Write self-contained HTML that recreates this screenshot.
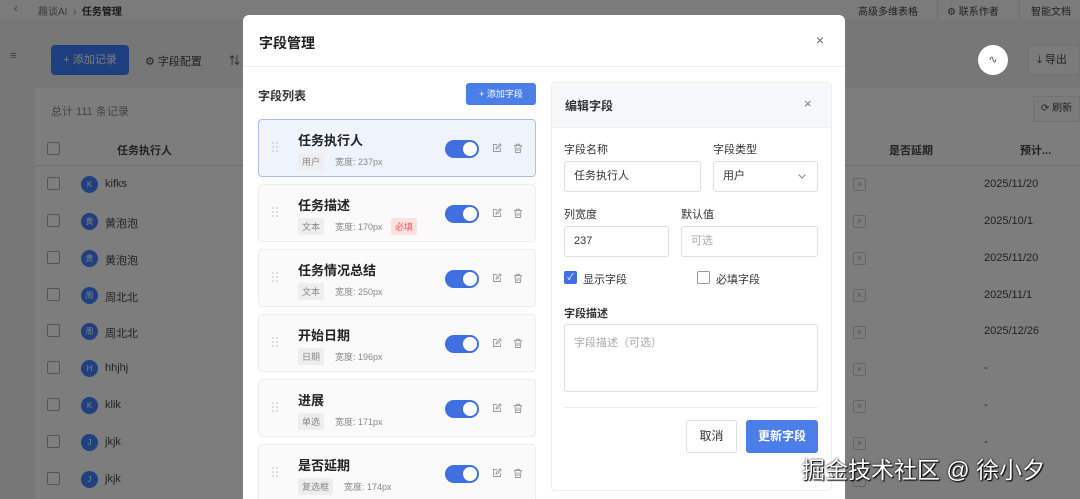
<!DOCTYPE html>
<html><head><meta charset="utf-8"><style>
*{box-sizing:border-box;margin:0;padding:0}
html,body{width:1080px;height:499px;overflow:hidden}
body{position:relative;background:#eeeeee;font-family:"Liberation Sans","Noto Sans CJK SC",sans-serif;font-size:12px;color:#222}
.a{position:absolute}
.chk{position:absolute;width:13px;height:13px;border:1px solid #aaa;border-radius:2px;background:#fff}
.av{position:absolute;width:17px;height:17px;border-radius:50%;background:#4080ff;color:#fff;font-size:8px;text-align:center;line-height:17px}
.xb{position:absolute;width:13px;height:13px;border:1px solid #ccc;border-radius:2px;color:#aaa;font-size:9px;text-align:center;line-height:11px}
.card{position:absolute;left:258px;width:278px;height:58px;border:1px solid #eceef1;border-radius:4px;background:#fafafa}
.card .t{position:absolute;left:39px;top:10px;font-size:13px;font-weight:bold;color:#222}
.card .tag{position:absolute;left:39px;top:33px;background:#eee;color:#888;font-size:9px;padding:2px 4px;border-radius:2px}
.card .w{position:absolute;top:35px;font-size:9px;color:#888}
.card .dr{position:absolute;left:13px;top:22px}
.card .tg{position:absolute;left:186px;top:20px;width:34px;height:18px;border-radius:9px;background:#3f6fe0}
.card .tg:after{content:"";position:absolute;right:2px;top:2px;width:14px;height:14px;border-radius:50%;background:#fff}
.card .ic{position:absolute;top:23px}
.lb{position:absolute;font-size:11px;color:#333}
.in{position:absolute;border:1px solid #dcdfe6;border-radius:3px;background:#fff;font-size:11px;padding-left:9px;color:#333}
.r{font-size:11px;color:#444}
</style></head><body>
<div class="a" style="left:0;top:0;width:1080px;height:20px;background:#f6f6f6"></div>
<div class="a" style="left:14px;top:3px;font-size:11px;color:#777">‹</div>
<div class="a" style="left:38px;top:3px;font-size:10px;color:#777">趣谈AI &nbsp;›&nbsp; <b style="color:#333">任务管理</b></div>
<div class="a" style="left:858px;top:3px;font-size:10px;color:#444">高级多维表格</div>
<div class="a" style="left:937px;top:0;width:1px;height:20px;background:#ddd"></div>
<div class="a" style="left:947px;top:3px;font-size:10px;color:#444">⚙ 联系作者</div>
<div class="a" style="left:1019px;top:0;width:1px;height:20px;background:#ddd"></div>
<div class="a" style="left:1031px;top:3px;font-size:10px;color:#444">智能文档</div>
<div class="a" style="left:10px;top:50px;color:#777;font-size:11px">≡</div>
<div class="a" style="left:51px;top:45px;width:78px;height:30px;background:#3c7cff;border-radius:4px;color:#fff;font-size:11px;line-height:30px;text-align:center">+ 添加记录</div>
<div class="a" style="left:145px;top:53px;font-size:11px;color:#444">⚙ 字段配置</div>
<div class="a" style="left:229px;top:52px;font-size:11px;color:#444">⇅</div>
<div class="a" style="left:1028px;top:45px;width:52px;height:30px;border:1px solid #e2e2e2;border-radius:3px 0 0 3px;background:#f6f6f6;color:#444;font-size:11px;line-height:28px;padding-left:8px">⤓ 导出</div>
<div class="a" style="left:35px;top:88px;width:1045px;height:411px;background:#fafafa"></div>
<div class="a" style="left:51px;top:103px;font-size:11px;color:#888">总计 111 条记录</div>
<div class="a" style="left:1033px;top:96px;width:47px;height:26px;border:1px solid #e2e2e2;background:#f6f6f6;color:#444;font-size:10px;line-height:24px;padding-left:7px">⟳ 刷新</div>
<div class="a" style="left:35px;top:165px;width:1045px;height:1px;background:#dadada"></div>
<div class="chk" style="left:47px;top:142px"></div>
<div class="a" style="left:117px;top:142px;font-size:11px;font-weight:bold;color:#444">任务执行人</div>
<div class="a" style="left:889px;top:142px;font-size:11px;font-weight:bold;color:#444">是否延期</div>
<div class="a" style="left:1020px;top:142px;font-size:11px;font-weight:bold;color:#444">预计...</div>
<div class="chk" style="left:47px;top:177px"></div><div class="av" style="left:81px;top:176px">K</div><div class="a r" style="left:105px;top:178px">kifks</div>
<div class="chk" style="left:47px;top:214px"></div><div class="av" style="left:81px;top:213px">黄</div><div class="a r" style="left:105px;top:215px">黄泡泡</div>
<div class="chk" style="left:47px;top:251px"></div><div class="av" style="left:81px;top:250px">黄</div><div class="a r" style="left:105px;top:252px">黄泡泡</div>
<div class="chk" style="left:47px;top:288px"></div><div class="av" style="left:81px;top:287px">周</div><div class="a r" style="left:105px;top:289px">周北北</div>
<div class="chk" style="left:47px;top:324px"></div><div class="av" style="left:81px;top:323px">周</div><div class="a r" style="left:105px;top:325px">周北北</div>
<div class="chk" style="left:47px;top:361px"></div><div class="av" style="left:81px;top:360px">H</div><div class="a r" style="left:105px;top:362px">hhjhj</div>
<div class="chk" style="left:47px;top:398px"></div><div class="av" style="left:81px;top:397px">K</div><div class="a r" style="left:105px;top:399px">klik</div>
<div class="chk" style="left:47px;top:435px"></div><div class="av" style="left:81px;top:434px">J</div><div class="a r" style="left:105px;top:436px">jkjk</div>
<div class="chk" style="left:47px;top:472px"></div><div class="av" style="left:81px;top:471px">J</div><div class="a r" style="left:105px;top:473px">jkjk</div>
<div class="xb" style="left:853px;top:178px">×</div><div class="a r" style="left:984px;top:178px">2025/11/20</div>
<div class="xb" style="left:853px;top:215px">×</div><div class="a r" style="left:984px;top:215px">2025/10/1</div>
<div class="xb" style="left:853px;top:252px">×</div><div class="a r" style="left:984px;top:252px">2025/11/20</div>
<div class="xb" style="left:853px;top:289px">×</div><div class="a r" style="left:984px;top:289px">2025/11/1</div>
<div class="xb" style="left:853px;top:326px">×</div><div class="a r" style="left:984px;top:325px">2025/12/26</div>
<div class="xb" style="left:853px;top:363px">×</div><div class="a r" style="left:984px;top:362px">-</div>
<div class="xb" style="left:853px;top:400px">×</div><div class="a r" style="left:984px;top:399px">-</div>
<div class="xb" style="left:853px;top:437px">×</div><div class="a r" style="left:984px;top:436px">-</div>
<div class="xb" style="left:853px;top:474px">×</div><div class="a r" style="left:984px;top:473px">-</div>

<!-- dim overlay -->
<div class="a" style="left:0;top:0;width:1080px;height:499px;background:rgba(0,0,0,0.5)"></div>
<div class="a" style="left:978px;top:45px;width:30px;height:30px;border-radius:50%;background:#fff;color:#555;text-align:center;line-height:30px;font-size:11px">∿</div>

<div class="a" style="left:243px;top:15px;width:602px;height:484px;background:#fff;border-radius:6px 6px 0 0"></div>
<div class="a" style="left:259px;top:33px;font-size:14px;font-weight:bold">字段管理</div>
<div class="a" style="left:816px;top:32px;font-size:14px;color:#666">×</div>
<div class="a" style="left:243px;top:66px;width:602px;height:1px;background:#f0f0f0"></div>
<div class="a" style="left:258px;top:87px;font-size:12px;font-weight:bold;color:#333">字段列表</div>
<div class="a" style="left:466px;top:83px;width:70px;height:22px;background:#4c7ee8;border-radius:3px;color:#fff;font-size:9px;line-height:22px;text-align:center">+ 添加字段</div>

<svg width="0" height="0" style="position:absolute"><defs>
<symbol id="dr" viewBox="0 0 6 10"><g fill="#bbb"><circle cx="1" cy="1" r=".8"/><circle cx="5" cy="1" r=".8"/><circle cx="1" cy="5" r=".8"/><circle cx="5" cy="5" r=".8"/><circle cx="1" cy="9" r=".8"/><circle cx="5" cy="9" r=".8"/></g></symbol>
<symbol id="ed" viewBox="0 0 10 10"><path d="M5 1.5H1.5v7h7V5M4 6l.3-1.6L8 .8l1.2 1.2L5.6 5.7z" fill="none" stroke="#999" stroke-width=".9"/></symbol>
<symbol id="dl" viewBox="0 0 10 10"><path d="M1 2.5h8M3.5 2.5V1.2h3v1.3M2 2.5l.6 7h4.8l.6-7M4 4.5v3.5M6 4.5v3.5" fill="none" stroke="#999" stroke-width=".9"/></symbol>
</defs></svg>

<div class="card" style="top:119px;background:#eef3fc;border-color:#a9c0ec"><svg class="dr" width="6" height="10"><use href="#dr"/></svg><div class="t">任务执行人</div><div class="tag">用户</div><div class="w" style="left:76px">宽度: 237px</div><div class="tg"></div><svg class="ic" style="left:233px" width="10" height="10"><use href="#ed"/></svg><svg class="ic" style="left:254px" width="10" height="10"><use href="#dl"/></svg></div>
<div class="card" style="top:184px"><svg class="dr" width="6" height="10"><use href="#dr"/></svg><div class="t">任务描述</div><div class="tag">文本</div><div class="w" style="left:76px">宽度: 170px</div><div class="tag" style="left:132px;background:#fde0e0;color:#e55">必填</div><div class="tg"></div><svg class="ic" style="left:233px" width="10" height="10"><use href="#ed"/></svg><svg class="ic" style="left:254px" width="10" height="10"><use href="#dl"/></svg></div>
<div class="card" style="top:249px"><svg class="dr" width="6" height="10"><use href="#dr"/></svg><div class="t">任务情况总结</div><div class="tag">文本</div><div class="w" style="left:76px">宽度: 250px</div><div class="tg"></div><svg class="ic" style="left:233px" width="10" height="10"><use href="#ed"/></svg><svg class="ic" style="left:254px" width="10" height="10"><use href="#dl"/></svg></div>
<div class="card" style="top:314px"><svg class="dr" width="6" height="10"><use href="#dr"/></svg><div class="t">开始日期</div><div class="tag">日期</div><div class="w" style="left:76px">宽度: 196px</div><div class="tg"></div><svg class="ic" style="left:233px" width="10" height="10"><use href="#ed"/></svg><svg class="ic" style="left:254px" width="10" height="10"><use href="#dl"/></svg></div>
<div class="card" style="top:379px"><svg class="dr" width="6" height="10"><use href="#dr"/></svg><div class="t">进展</div><div class="tag">单选</div><div class="w" style="left:76px">宽度: 171px</div><div class="tg"></div><svg class="ic" style="left:233px" width="10" height="10"><use href="#ed"/></svg><svg class="ic" style="left:254px" width="10" height="10"><use href="#dl"/></svg></div>
<div class="card" style="top:444px;height:70px"><svg class="dr" width="6" height="10"><use href="#dr"/></svg><div class="t">是否延期</div><div class="tag">复选框</div><div class="w" style="left:85px">宽度: 174px</div><div class="tg"></div><svg class="ic" style="left:233px" width="10" height="10"><use href="#ed"/></svg><svg class="ic" style="left:254px" width="10" height="10"><use href="#dl"/></svg></div>

<div class="a" style="left:551px;top:82px;width:281px;height:409px;border:1px solid #eceef1;border-radius:4px;background:#fff"></div>
<div class="a" style="left:552px;top:83px;width:279px;height:45px;background:#f7f8fa;border-bottom:1px solid #eceef1"></div>
<div class="a" style="left:565px;top:97px;font-size:12px;font-weight:bold;color:#333">编辑字段</div>
<div class="a" style="left:804px;top:96px;font-size:13px;color:#777">×</div>
<div class="lb" style="left:564px;top:141px">字段名称</div>
<div class="lb" style="left:713px;top:141px">字段类型</div>
<div class="in" style="left:564px;top:161px;width:137px;height:31px;line-height:29px">任务执行人</div>
<div class="in" style="left:713px;top:161px;width:105px;height:31px;line-height:29px">用户<svg style="position:absolute;right:11px;top:12px" width="8" height="5"><path d="M.5.5 4 4 7.5.5" fill="none" stroke="#888"/></svg></div>
<div class="lb" style="left:564px;top:206px">列宽度</div>
<div class="lb" style="left:681px;top:206px">默认值</div>
<div class="in" style="left:564px;top:226px;width:105px;height:31px;line-height:29px">237</div>
<div class="in" style="left:681px;top:226px;width:137px;height:31px;line-height:29px;color:#aaa">可选</div>
<div class="a" style="left:564px;top:271px;width:13px;height:13px;background:#3f6fe0;border-radius:2px;color:#fff;font-size:9px;text-align:center;line-height:13px">✓</div>
<div class="lb" style="left:583px;top:271px">显示字段</div>
<div class="a" style="left:697px;top:271px;width:13px;height:13px;border:1px solid #999;border-radius:2px"></div>
<div class="lb" style="left:716px;top:271px">必填字段</div>
<div class="lb" style="left:564px;top:305px;font-weight:bold">字段描述</div>
<div class="in" style="left:564px;top:324px;width:254px;height:68px;padding-top:9px;color:#aaa">字段描述（可选）</div>
<div class="a" style="left:564px;top:407px;width:254px;height:1px;background:#eee"></div>
<div class="a" style="left:686px;top:420px;width:51px;height:33px;border:1px solid #dcdfe6;border-radius:3px;font-size:12px;line-height:31px;text-align:center;color:#333">取消</div>
<div class="a" style="left:746px;top:420px;width:72px;height:33px;background:#4c7ee8;border-radius:3px;font-size:12px;line-height:33px;text-align:center;color:#fff;font-weight:bold">更新字段</div>

<div class="a" style="left:802px;top:451px;font-size:23px;color:#fff;text-shadow:0 0 2px #000,1px 1px 1px #000;white-space:nowrap">掘金技术社区 @ 徐小夕</div>
</body></html>
